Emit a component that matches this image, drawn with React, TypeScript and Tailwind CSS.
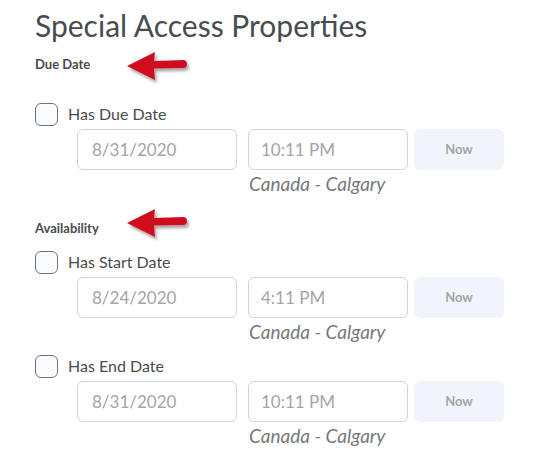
import React from 'react';

const Arrow: React.FC<{ top: number }> = ({ top }) => (
  <svg
    className="absolute"
    style={{ left: 124, top }}
    width="70"
    height="40"
    viewBox="0 0 70 40"
  >
    <defs>
      <filter id={`sh${top}`} x="-20%" y="-20%" width="150%" height="160%">
        <feDropShadow dx="2" dy="3" stdDeviation="1.6" floodColor="#000" floodOpacity="0.35" />
      </filter>
    </defs>
    <path
      d="M3 17 L31 3 L30 12 L59 11 Q63 11 63 15 Q63 19 59 19 L30 19.5 L31 31 Z"
      fill="#d0101e"
      filter={`url(#sh${top})`}
    />
  </svg>
);

const Checkbox: React.FC<{ label: string }> = ({ label }) => (
  <div className="flex items-center h-6">
    <div className="w-[23px] h-[23px] rounded-[6px] border border-[#6e7376] bg-[#f9fbff]" />
    <span className="ml-[10px] text-[16px] text-[#494c4e]">{label}</span>
  </div>
);

const DateRow: React.FC<{ date: string; time: string }> = ({ date, time }) => (
  <div className="ml-[42px]">
    <div className="flex">
      <div className="w-[160px] h-[41px] rounded-[6px] border border-[#cdd5dc] flex items-center pl-[14px] text-[17px] text-[#a3a5a7]">
        {date}
      </div>
      <div className="ml-[11px] w-[160px] h-[41px] rounded-[6px] border border-[#cdd5dc] flex items-center pl-[12px] text-[17px] text-[#a3a5a7]">
        {time}
      </div>
      <div className="ml-[6px] w-[90px] h-[41px] rounded-[6px] bg-[#f1f5fb] flex items-center justify-center text-[13px] font-bold text-[#a3a5a7]">
        Now
      </div>
    </div>
    <div className="ml-[172px] mt-[3px] text-[19px] leading-[22px] italic text-[#76797b]">Canada - Calgary</div>
  </div>
);

export default function App() {
  return (
    <div
      className="relative w-[543px] h-[473px] bg-white pl-[35px] pt-[7px]"
      style={{ fontFamily: 'Lato, "Noto Sans", sans-serif' }}
    >
      <h1 className="text-[30px] leading-[36px] text-[#494c4e]">Special Access Properties</h1>

      <div className="mt-[13px] text-[13px] leading-4 font-bold text-[#494c4e]">Due Date</div>

      <div className="mt-[30px]">
        <Checkbox label="Has Due Date" />
      </div>
      <div className="mt-[3px]">
        <DateRow date="8/31/2020" time="10:11 PM" />
      </div>

      <div className="mt-[25px] text-[13px] leading-4 font-bold text-[#494c4e]">Availability</div>

      <div className="mt-[14px]">
        <Checkbox label="Has Start Date" />
      </div>
      <div className="mt-[3px]">
        <DateRow date="8/24/2020" time="4:11 PM" />
      </div>

      <div className="mt-[11px]">
        <Checkbox label="Has End Date" />
      </div>
      <div className="mt-[3px]">
        <DateRow date="8/31/2020" time="10:11 PM" />
      </div>

      <Arrow top={49} />
      <Arrow top={206} />
    </div>
  );
}
